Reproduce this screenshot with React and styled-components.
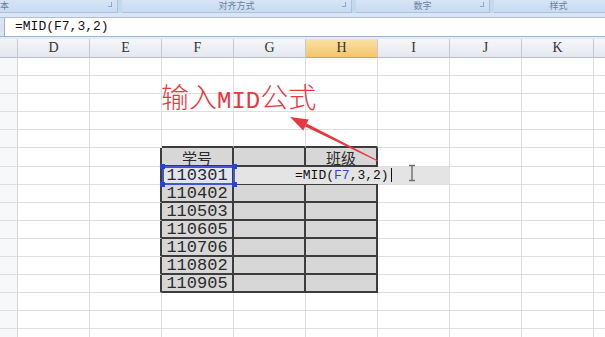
import styled, { createGlobalStyle } from 'styled-components';

const COLS = ['D', 'E', 'F', 'G', 'H', 'I', 'J', 'K', 'L'];
const ROW_COUNT = 16;
const ROW_H = 18.1;
const SHEET_TOP = 39;

// 表格区域：第 6~13 行，F~H 列
const T_TOP = 6;
const T_BOTTOM = 13;
const T_LEFT = 2;
const T_RIGHT = 4;

const tableData = {
  6: ['学号', '', '班级'],
  7: ['110301', '', ''],
  8: ['110402', '', ''],
  9: ['110503', '', ''],
  10: ['110605', '', ''],
  11: ['110706', '', ''],
  12: ['110802', '', ''],
  13: ['110905', '', ''],
};

const GlobalStyle = createGlobalStyle`
  html, body {
    margin: 0;
    padding: 0;
    background: #ffffff;
    overflow: hidden;
  }
  body {
    font-family: "Liberation Sans", "Noto Sans CJK SC", sans-serif;
  }
`;

const inTable = (r, c) => r >= T_TOP && r <= T_BOTTOM && c >= T_LEFT && c <= T_RIGHT;

const App = () => {
  const rows = [];
  for (let r = 1; r <= ROW_COUNT; r++) {
    const cells = COLS.map((col, c) => {
      const table = inTable(r, c);
      const darkRight = r >= T_TOP && r <= T_BOTTOM && c >= T_LEFT - 1 && c <= T_RIGHT;
      const darkBottom = r >= T_TOP - 1 && r <= T_BOTTOM && c >= T_LEFT && c <= T_RIGHT;
      const text = table ? tableData[r][c - T_LEFT] : '';
      const isCjk = r === T_TOP;
      const selected = r === 7 && c === T_LEFT;
      return (
        <Cell
          key={col}
          $fill={table}
          $selected={selected}
          $darkRight={darkRight}
          $darkBottom={darkBottom}
          $cjk={isCjk}
        >
          {text}
        </Cell>
      );
    });
    rows.push(<RowHead key={`h${r}`} />, ...cells);
  }

  return (
    <Page>
      <GlobalStyle />
      <Ribbon>
        <RibbonGroup $w={118}>
          <GroupLabel $align="left">本</GroupLabel>
          <Launcher />
        </RibbonGroup>
        <RibbonGroup $w={230}>
          <GroupLabel>对齐方式</GroupLabel>
          <Launcher />
        </RibbonGroup>
        <RibbonGroup $w={134}>
          <GroupLabel>数字</GroupLabel>
          <Launcher />
        </RibbonGroup>
        <RibbonGroup $w={130}>
          <GroupLabel>样式</GroupLabel>
        </RibbonGroup>
      </Ribbon>
      <RibbonFoot />
      <FormulaBar>
        <NameBoxEdge />
        <FormulaText>=MID(F7,3,2)</FormulaText>
      </FormulaBar>
      <BarGap />

      <Sheet>
        <HeaderRow>
          <Corner />
          {COLS.map((col) => (
            <ColHead key={col} $active={col === 'H'}>
              {col === 'L' ? '' : col}
            </ColHead>
          ))}
        </HeaderRow>
        <Body>{rows}</Body>

        <Editor>
          <EditText>
            =MID(<Ref>F7</Ref>,3,2)
          </EditText>
          <Caret />
        </Editor>

        <Selection>
          <Handle $x="left" $y="top" />
          <Handle $x="right" $y="top" />
          <Handle $x="left" $y="bottom" />
          <Handle $x="right" $y="bottom" />
        </Selection>

        <Note>
          <NoteCjk>输入</NoteCjk>
          <NoteLatin>MID</NoteLatin>
          <NoteCjk>公式</NoteCjk>
        </Note>

        <Arrow width="110" height="60" viewBox="0 0 110 60">
          <polygon points="10,7 23.3,20.4 28.7,9.6" fill="#e8373f" />
          <polygon points="25.2,16.6 26.8,13.4 98.2,50.6 97.8,51.4" fill="#e8373f" />
        </Arrow>

        <IBeam width="10" height="18" viewBox="0 0 10 18">
          <path d="M2 1.5h6M5 1.5v15M2 16.5h6" stroke="#6e6e6e" strokeWidth="1.4" fill="none" />
        </IBeam>
      </Sheet>
    </Page>
  );
};

export default App;

const Page = styled.div`
  width: 605px;
  height: 337px;
  overflow: hidden;
  background: #ffffff;
`;

const Ribbon = styled.div`
  display: flex;
  gap: 4px;
  height: 13px;
  background: #c4d8ef;
  overflow: hidden;
`;

const RibbonGroup = styled.div`
  position: relative;
  flex: 0 0 ${(p) => p.$w}px;
  display: flex;
  align-items: center;
  background: linear-gradient(#d6e4f5, #c9dbf1);
  border-right: 1px solid #a9c2e0;
  border-bottom: 1px solid #a9c2e0;
  box-sizing: border-box;
`;

const GroupLabel = styled.div`
  flex: 1;
  text-align: ${(p) => p.$align || 'center'};
  font-family: "Noto Sans CJK SC", sans-serif;
  font-size: 9px;
  line-height: 12px;
  color: #6d7f9c;
`;

const Launcher = styled.span`
  position: absolute;
  right: 5px;
  top: 2px;
  width: 3px;
  height: 4px;
  border-right: 1px solid #8fa7c6;
  border-bottom: 1px solid #8fa7c6;
`;

const RibbonFoot = styled.div`
  height: 4px;
  background: #dae6f5;
  border-bottom: 1px solid #aebfd6;
`;

const FormulaBar = styled.div`
  display: flex;
  height: 18px;
  background: #ffffff;
  border-bottom: 1px solid #9fb4cc;
`;

const NameBoxEdge = styled.div`
  width: 4px;
  background: #d9e4f2;
  border-right: 1px solid #9fb4cc;
`;

const FormulaText = styled.div`
  padding-left: 10px;
  font-family: "Liberation Mono", monospace;
  font-size: 13px;
  line-height: 18px;
  color: #111111;
`;

const BarGap = styled.div`
  height: 2px;
  background: #e6ecf4;
`;

const Sheet = styled.div`
  position: relative;
`;

const HeaderRow = styled.div`
  display: grid;
  grid-template-columns: 18px repeat(9, 72px);
  height: 19px;
`;

const Corner = styled.div`
  background: linear-gradient(#f2f4f7, #e3e7ed);
  border-right: 1px solid #c6cbd2;
  border-bottom: 1px solid #b7bdc6;
`;

const ColHead = styled.div`
  display: flex;
  align-items: center;
  justify-content: center;
  font-family: "Liberation Serif", serif;
  font-size: 14px;
  color: #333333;
  background: ${(p) =>
    p.$active ? 'linear-gradient(#fbe2a8, #f3c568)' : 'linear-gradient(#f6f7f9, #e4e8ee)'};
  border-right: 1px solid #c6cbd2;
  border-bottom: 1px solid ${(p) => (p.$active ? '#e0a63e' : '#b7bdc6')};
  box-sizing: border-box;
`;

const Body = styled.div`
  display: grid;
  grid-template-columns: 18px repeat(9, 72px);
  grid-auto-rows: ${ROW_H}px;
`;

const RowHead = styled.div`
  background: #f7f8fa;
  border-right: 1px solid #d2d5da;
  border-bottom: 1px solid #dcdee2;
`;

const Cell = styled.div`
  display: flex;
  align-items: center;
  justify-content: center;
  box-sizing: border-box;
  background: ${(p) => (p.$selected ? '#e2e4ee' : p.$fill ? '#d7d7d7' : '#ffffff')};
  border-right: ${(p) => (p.$darkRight ? '2px solid #3d3d3d' : '1px solid #dcdee2')};
  border-bottom: ${(p) => (p.$darkBottom ? '2px solid #3d3d3d' : '1px solid #dcdee2')};
  font-family: ${(p) =>
    p.$cjk ? '"Noto Sans CJK SC", sans-serif' : '"Liberation Mono", monospace'};
  font-size: ${(p) => (p.$cjk ? '15px' : '17px')};
  line-height: 1;
  padding-top: 1px;
  color: #2a2a2a;
`;

const Editor = styled.div`
  position: absolute;
  left: 234px;
  top: ${166.6 - SHEET_TOP}px;
  width: 216px;
  height: 17px;
  display: flex;
  align-items: center;
  padding-left: 61px;
  box-sizing: border-box;
  background: #e4e4e4;
`;

const EditText = styled.span`
  font-family: "Liberation Mono", monospace;
  font-size: 13px;
  color: #111111;
`;

const Ref = styled.span`
  color: #3344c8;
`;

const Caret = styled.span`
  width: 1px;
  height: 14px;
  margin-left: 2px;
  background: #111111;
`;

const Selection = styled.div`
  position: absolute;
  left: 162px;
  top: ${166 - SHEET_TOP}px;
  width: 73px;
  height: 19px;
  box-sizing: border-box;
  border: 2px solid #3f58d6;
`;

const Handle = styled.span`
  position: absolute;
  width: 5px;
  height: 5px;
  background: #2743d4;
  ${(p) => (p.$x === 'left' ? 'left: -4px;' : 'right: -4px;')}
  ${(p) => (p.$y === 'top' ? 'top: -4px;' : 'bottom: -4px;')}
`;

const Note = styled.div`
  position: absolute;
  left: 161px;
  top: ${76 - SHEET_TOP}px;
  display: flex;
  align-items: baseline;
  color: #e8373f;
  white-space: nowrap;
`;

const NoteCjk = styled.span`
  font-family: "Noto Sans CJK SC", sans-serif;
  font-weight: 300;
  font-size: 28px;
`;

const NoteLatin = styled.span`
  font-family: "Liberation Mono", monospace;
  font-size: 24px;
`;

const Arrow = styled.svg`
  position: absolute;
  left: 280px;
  top: ${110 - SHEET_TOP}px;
`;

const IBeam = styled.svg`
  position: absolute;
  left: 407px;
  top: ${164 - SHEET_TOP}px;
`;
